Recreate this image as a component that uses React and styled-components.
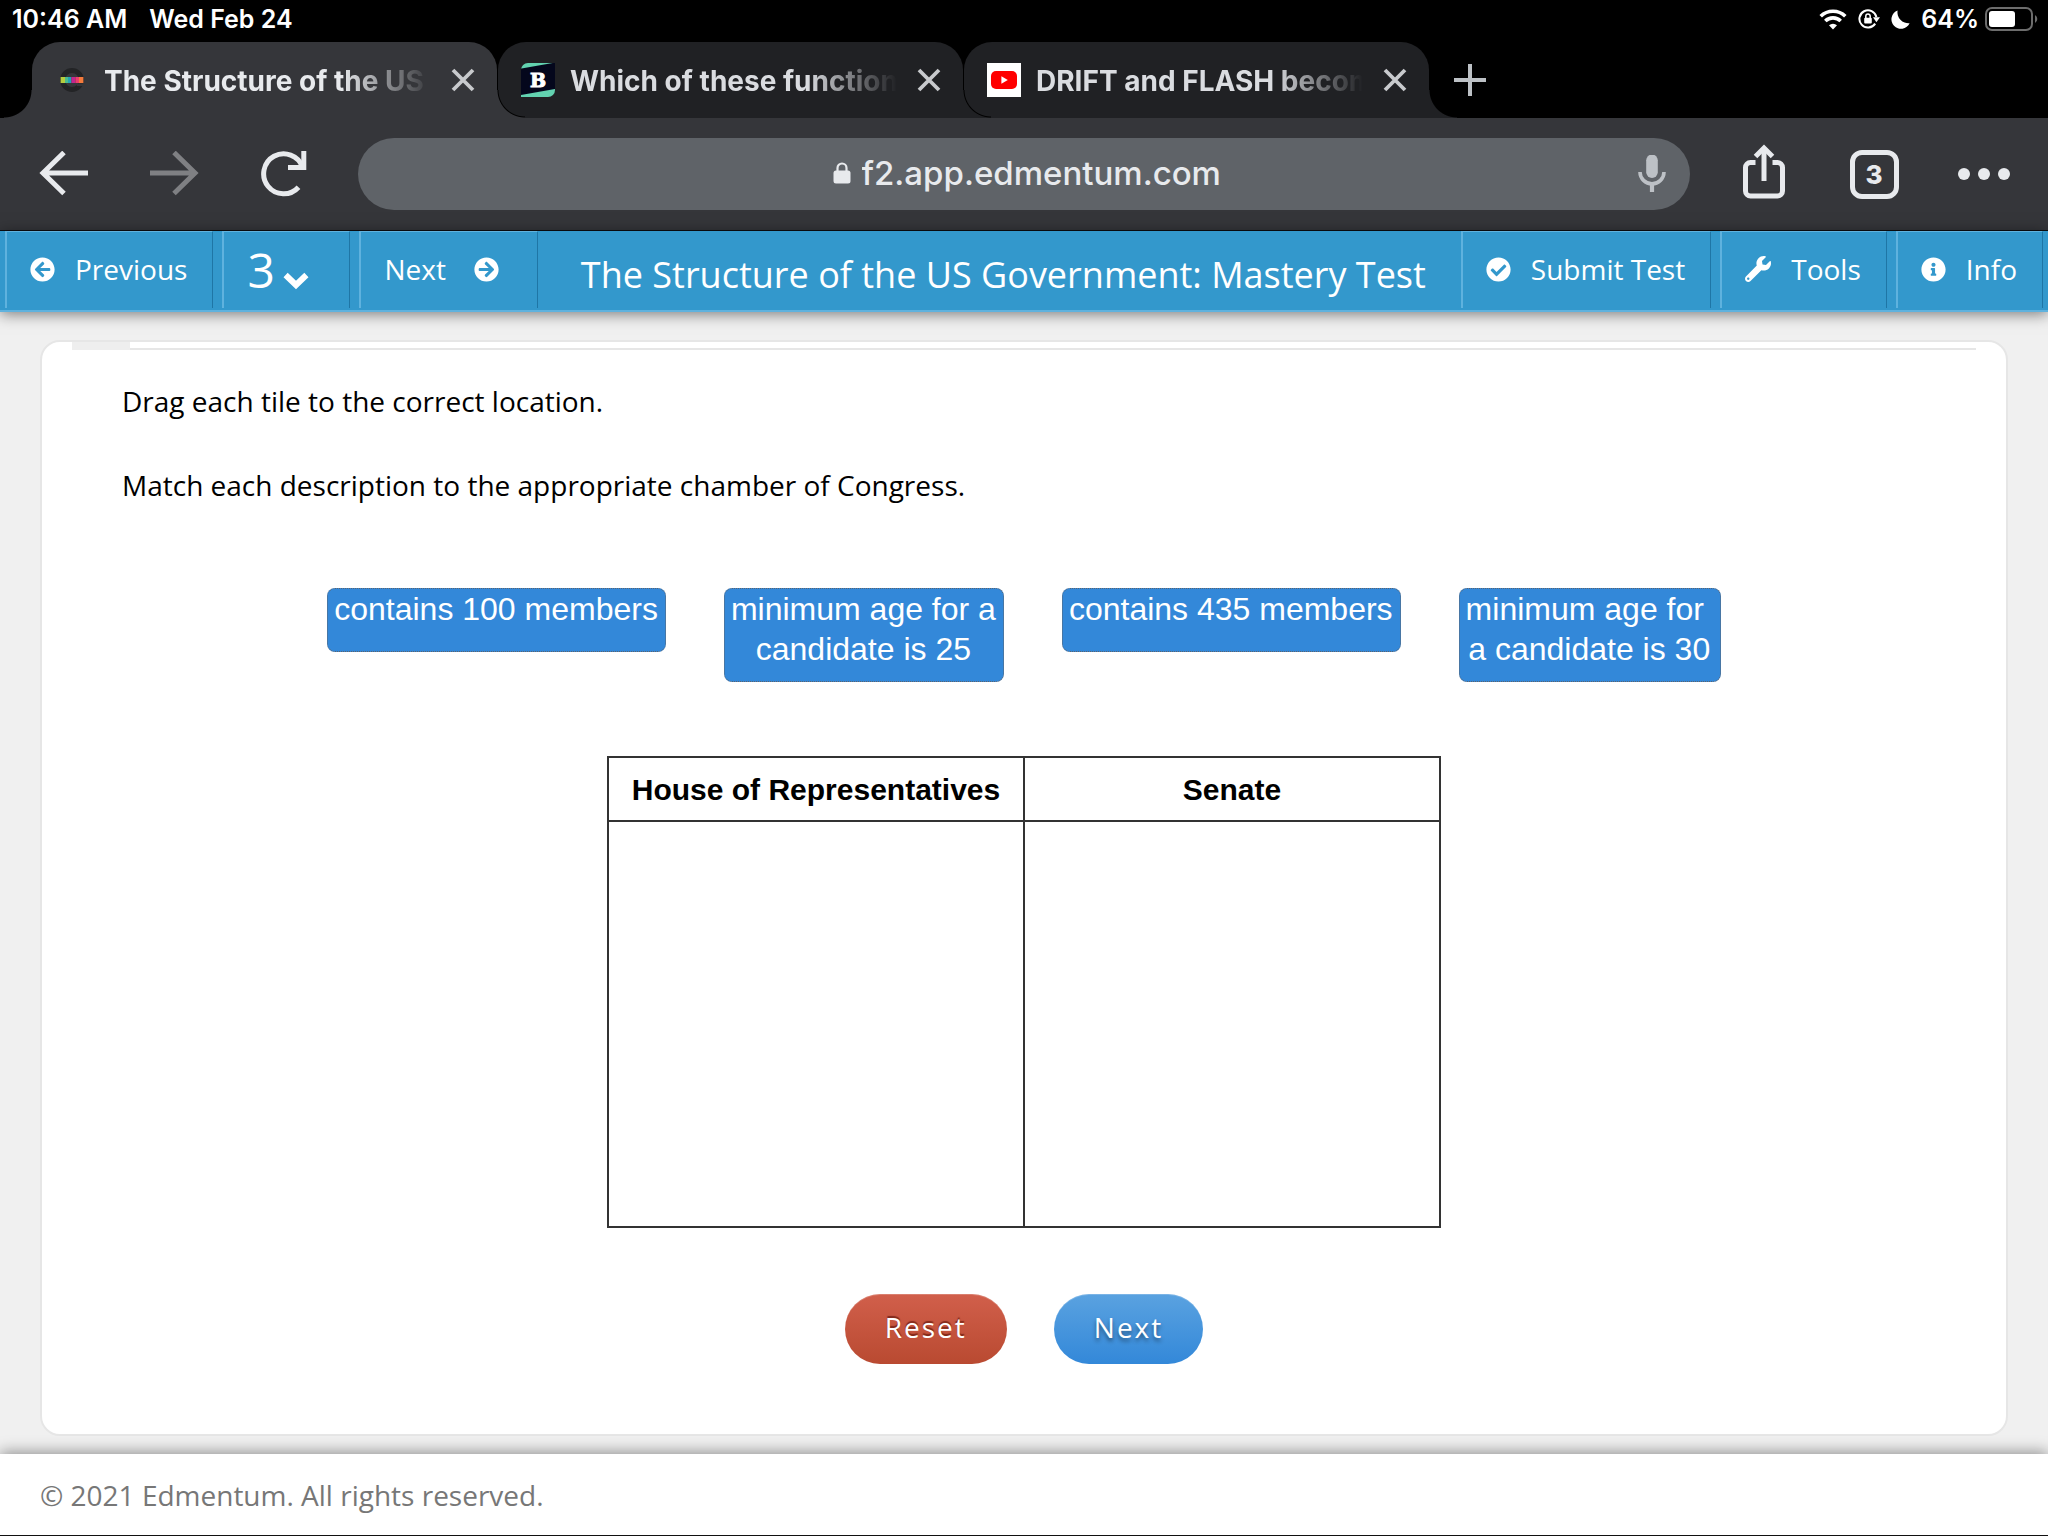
import React from "react";
import styled, { createGlobalStyle, css } from "styled-components";
import {
  FaArrowCircleLeft,
  FaArrowCircleRight,
  FaCheckCircle,
  FaInfoCircle,
  FaWrench,
} from "react-icons/fa";

const systemFont = `Inter, Roboto, "Liberation Sans", sans-serif`;
const pageFont = `"Open Sans", "Noto Sans", sans-serif`;
const tileFont = `"Liberation Sans", Arial, sans-serif`;

const colors = {
  toolbar: "#35363a",
  idleTab: "#202124",
  field: "#5f6368",
  glyph: "#e8eaed",
  bar: "#3398cc",
  barLight: "#5fb2de",
  barDark: "#1f76a6",
  page: "#f0f0f0",
  line: "#e6e6e6",
  tile: "#3388d9",
};

const GlobalStyle = createGlobalStyle`
  * { box-sizing: border-box; }
  body { margin: 0; background: ${colors.page}; }
  button, input, select { font: inherit; color: inherit; margin: 0; }
  h1, p, ul { margin: 0; padding: 0; }
`;

const Screen = styled.div`
  display: flex;
  flex-direction: column;
  min-height: 100vh;
  font-family: ${pageFont};
`;

/* ---------- status bar ---------- */

const StatusBar = styled.header`
  display: flex;
  align-items: flex-start;
  justify-content: space-between;
  height: 42px;
  padding: 0 10px 0 12px;
  background: #000;
  color: #fff;
  font: 600 25px/38px ${systemFont};
`;

const StatusGroup = styled.div`
  display: flex;
  align-items: center;
  height: 38px;
  gap: ${(p) => p.$gap}px;
`;

/* ---------- tabs ---------- */

const TabStrip = styled.nav`
  display: flex;
  gap: 1px;
  height: 76px;
  padding-left: 32px;
  background: #000;
`;

const flare = css`
  content: "";
  position: absolute;
  bottom: 0;
  width: 28px;
  height: 28px;
`;

const Tab = styled.div`
  position: relative;
  display: flex;
  align-items: center;
  flex: 0 1 465px;
  min-width: 0;
  padding: 0 16px 0 23px;
  border-radius: 28px 28px 0 0;
  background: ${(p) => (p.$active ? colors.toolbar : colors.idleTab)};
  z-index: ${(p) => p.$level};

  &::after {
    ${flare}
    left: 100%;
    background: radial-gradient(
      circle at 100% 0,
      transparent 26px,
      #000 27px,
      ${(p) => (p.$active ? colors.toolbar : colors.idleTab)} 28px
    );
  }

  &::before {
    ${flare}
    display: ${(p) => (p.$active ? "block" : "none")};
    right: 100%;
    background: radial-gradient(circle at 0 0, transparent 27px, ${colors.toolbar} 28px);
  }
`;

const TabTitle = styled.button`
  flex: 1;
  min-width: 0;
  margin-left: 15px;
  padding: 2px 0 0;
  border: 0;
  background: none;
  color: ${(p) => (p.$active ? "#e8eaed" : "#dadce0")};
  font: 700 28px/40px ${systemFont};
  text-align: left;
  white-space: nowrap;
  overflow: hidden;
  mask-image: linear-gradient(to right, #000 calc(100% - 90px), transparent);
`;

const IconButton = styled.button`
  display: flex;
  align-items: center;
  justify-content: center;
  flex: none;
  width: ${(p) => p.$size}px;
  height: ${(p) => p.$size}px;
  padding: 0;
  border: 0;
  background: none;
  color: ${(p) => p.$color || colors.glyph};
`;

const TabClose = styled(IconButton)`
  margin-left: 14px;
`;

const NewTab = styled(IconButton)`
  align-self: center;
  margin-left: 18px;
`;

/* ---------- browser toolbar ---------- */

const Toolbar = styled.div`
  display: flex;
  align-items: center;
  height: 113px;
  padding: 0 29px;
  background: ${colors.toolbar};
  border-bottom: 1px solid #0c0d10;
`;

const ToolGroup = styled.div`
  display: flex;
  align-items: center;
  gap: 40px;
`;

const Omnibox = styled.div`
  display: grid;
  grid-template-columns: 1fr auto 1fr;
  align-items: center;
  flex: 1;
  height: 72px;
  margin: 0 39px;
  padding: 0 24px 0 32px;
  border-radius: 36px;
  background: ${colors.field};
`;

const Address = styled.label`
  display: flex;
  align-items: center;
  grid-column: 2;
  gap: 11px;
`;

const AddressInput = styled.input`
  width: 362px;
  height: 46px;
  padding: 0 0 2px;
  border: 0;
  outline: 0;
  background: none;
  color: ${colors.glyph};
  font: 500 33px/44px ${systemFont};
`;

const MicSlot = styled.div`
  justify-self: end;
`;

const TabCount = styled.button`
  width: 49px;
  height: 49px;
  padding: 0;
  border: 5px solid ${colors.glyph};
  border-radius: 12px;
  background: none;
  font: 800 26px/39px ${systemFont};
  color: ${colors.glyph};
`;

/* ---------- test bar ---------- */

const TestBar = styled.div`
  display: flex;
  align-items: stretch;
  gap: 9px;
  height: 81px;
  padding: 0 5px;
  background: ${colors.bar};
  border-bottom: 2px solid ${colors.barLight};
  box-shadow: 0 2px 14px rgba(0, 0, 0, 0.5);
  color: #fff;
  z-index: 1;
`;

const barCell = css`
  display: flex;
  align-items: center;
  flex: none;
  margin-bottom: 2px;
  border: 0 solid ${colors.barLight};
  border-width: 1px 1px 0 2px;
  border-right-color: ${colors.barDark};
  background: none;
  white-space: nowrap;
`;

const BarButton = styled.button`
  ${barCell}
  gap: ${(p) => p.$gap}px;
  padding: 0 ${(p) => p.$right || 25}px 2px 23px;
  font: 400 28px/38px ${pageFont};
`;

const PagePicker = styled.label`
  ${barCell}
  gap: 8px;
  padding: 0 40px 0 23px;
`;

const PageSelect = styled.select`
  width: 28px;
  height: 66px;
  padding: 0;
  border: 0;
  appearance: none;
  background: none;
  font: 400 48px/66px ${pageFont};
`;

const PickerArrow = styled.span`
  display: flex;
  padding-top: 22px;
`;

const BarTitle = styled.h1`
  flex: 1;
  padding: 6px 0 0 8px;
  font: 400 36px/76px ${pageFont};
  text-align: center;
  white-space: nowrap;
`;

/* ---------- question ---------- */

const Main = styled.main`
  display: flex;
  flex: 1;
  padding: 28px 40px 18px;
`;

const Card = styled.section`
  display: flex;
  flex-direction: column;
  flex: 1;
  border: 2px solid ${colors.line};
  border-radius: 20px;
  background: #fff;
  padding: 0 30px;
`;

const ProgressLine = styled.div`
  height: 8px;
  border-bottom: 2px solid ${colors.line};
`;

const ProgressMark = styled.div`
  width: 58px;
  height: 8px;
  background: #eeeeee;
`;

const Prompt = styled.div`
  display: flex;
  flex-direction: column;
  gap: 42px;
  padding: 30px 50px 0;
  color: #000;
  font: 400 28px/42px ${pageFont};
`;

const Tiles = styled.ul`
  display: flex;
  align-items: flex-start;
  justify-content: center;
  gap: 58px;
  margin-top: 82px;
  min-height: 94px;
  list-style: none;
`;

const Tile = styled.button`
  display: flex;
  flex-direction: column;
  align-items: center;
  justify-content: flex-start;
  min-height: 64px;
  padding: 0 7px 12px 6px;
  border: 1px dotted #5c6470;
  border-radius: 8px;
  background: ${colors.tile};
  color: #fff;
  font: 400 32px/40px ${tileFont};
  white-space: nowrap;
`;

const Chambers = styled.table`
  align-self: center;
  width: 834px;
  margin-top: 74px;
  border-collapse: collapse;
  table-layout: fixed;
  color: #000;
  font: 700 30px/40px ${tileFont};

  th,
  td {
    padding: 0;
    border: 2px solid #333;
  }
  th {
    height: 64px;
    padding-top: 2px;
  }
  td {
    height: 406px;
  }
`;

const Actions = styled.div`
  display: flex;
  justify-content: center;
  gap: 47px;
  padding: 66px 0 69px;
`;

const PillButton = styled.button`
  height: 70px;
  padding: 0 40px 4px;
  border: 0;
  border-radius: 35px;
  background: ${(p) =>
    p.$primary
      ? "linear-gradient(#5aa2e0, #3388d9)"
      : "linear-gradient(#d15f4b, #b94a31)"};
  box-shadow: inset 0 1px 0 rgba(255, 255, 255, 0.2);
  color: #fff;
  font: 500 28px/38px ${pageFont};
  letter-spacing: 2px;
  text-shadow: ${(p) =>
    p.$primary ? "0 3px 4px rgba(0, 0, 0, 0.45)" : "0 -2px 1px rgba(80, 10, 0, 0.6)"};
`;

const Footer = styled.footer`
  padding: 22px 40px 21px;
  border-bottom: 1px solid #111;
  background: #fff;
  box-shadow: 0 -2px 14px rgba(0, 0, 0, 0.4);
  color: #777;
  font: 400 28px/38px ${pageFont};
  z-index: 1;
`;

/* ---------- drawings ---------- */

const WifiIcon = () => (
  <svg width="28" height="21" viewBox="0 0 28 21" fill="none" stroke="#fff" strokeWidth="3.6">
    <path d="M1.7 7.2a17.6 17.6 0 0 1 24.6 0" />
    <path d="M6.3 12a11 11 0 0 1 15.4 0" />
    <path d="M14 20.4l-4-4.2a6 6 0 0 1 8 0z" fill="#fff" stroke="none" />
  </svg>
);

const RotationLockIcon = () => (
  <svg width="22" height="20" viewBox="0 0 22 20" fill="none" stroke="#fff" strokeWidth="2">
    <path d="M17.2 14.6A8.6 8.6 0 1 1 18.4 8" />
    <path d="M15 8.2h7l-3.6 5z" fill="#fff" stroke="none" />
    <rect x="6.2" y="8.8" width="7.6" height="5.8" rx="1" fill="#fff" stroke="none" />
    <path d="M7.8 9V7.2a2.2 2.2 0 0 1 4.4 0V9" strokeWidth="1.5" />
  </svg>
);

const MoonIcon = () => (
  <svg width="19" height="19" viewBox="0 0 19 19" fill="#fff">
    <path d="M6.6.4A11 11 0 0 0 18.6 13.2 9.5 9.5 0 1 1 6.6.4z" />
  </svg>
);

const BatteryIcon = () => (
  <svg width="53" height="24" viewBox="0 0 53 24">
    <rect x="1" y="1" width="46" height="22" rx="6" fill="none" stroke="#6d6d6d" strokeWidth="2" />
    <rect x="4" y="4" width="26" height="16" rx="3" fill="#fff" />
    <path d="M50 8a4.6 4.6 0 0 1 0 8z" fill="#6d6d6d" />
  </svg>
);

const EdmentumIcon = () => (
  <svg width="34" height="34" viewBox="0 0 34 34">
    <circle cx="17" cy="17" r="9.4" fill="none" stroke="#232426" strokeWidth="5" />
    <path d="M22 20.4h8v2.6h-8z" fill="#35363a" />
    <rect x="5.6" y="14" width="4.4" height="6" fill="#b5cc3f" />
    <rect x="10" y="14" width="3" height="6" fill="#4dbd8b" />
    <rect x="13" y="14" width="3.4" height="6" fill="#22a3b5" />
    <rect x="16.4" y="14" width="4" height="6" fill="#c2268f" />
    <rect x="20.4" y="14" width="3.6" height="6" fill="#ec3b6e" />
    <rect x="24" y="14" width="4.4" height="6" fill="#f47a3c" />
  </svg>
);

const LetterMark = styled.span`
  display: flex;
  align-items: center;
  justify-content: center;
  width: 34px;
  height: 34px;
  border-radius: 7px 0 7px 0;
  background: linear-gradient(170deg, #62d2b0 5px, #04071c 6px, #04071c 31px, #62d2b0 32px);
  color: #fff;
  font: 700 19px/34px "DejaVu Serif", serif;
  -webkit-text-stroke: 1px #fff;
`;

const YouTubeIcon = () => (
  <svg width="34" height="34" viewBox="0 0 34 34">
    <rect width="34" height="34" fill="#fff" />
    <rect x="4" y="8" width="26" height="18" rx="5" fill="#f00" />
    <path d="M14.4 13.2l6.4 3.8-6.4 3.8z" fill="#fff" />
  </svg>
);

const CloseIcon = () => (
  <svg width="24" height="24" viewBox="0 0 24 24" stroke="currentColor" strokeWidth="3.8">
    <path d="M2 2l20 20M22 2L2 22" />
  </svg>
);

const PlusIcon = () => (
  <svg width="32" height="32" viewBox="0 0 32 32" stroke="currentColor" strokeWidth="4">
    <path d="M16 0v32M0 16h32" />
  </svg>
);

const ArrowIcon = ({ forward }) => (
  <svg width="50" height="46" viewBox="0 1 50 46" fill="none" stroke="currentColor" strokeWidth="5">
    <path d={forward ? "M1 23H46M25 2.5L46 23L25 43.5" : "M49 23H4M25 2.5L4 23L25 43.5"} />
  </svg>
);

const ReloadIcon = () => (
  <svg width="46" height="46" viewBox="0 1 46 46" fill="none" stroke="currentColor" strokeWidth="5">
    <path d="M37.5 37.2A20 20 0 1 1 41.5 17" />
    <path d="M42.8 1V17.5H27" />
  </svg>
);

const LockIcon = () => (
  <svg width="18" height="24" viewBox="0 0 18 24">
    <rect x="0.5" y="8.5" width="17" height="13" rx="2.5" fill="#e8eaed" />
    <path d="M4.5 9V6a4.5 4.5 0 0 1 9 0v3" fill="none" stroke="#e8eaed" strokeWidth="2.2" />
  </svg>
);

const MicIcon = () => (
  <svg width="28" height="38" viewBox="0 1 28 38" fill="none" stroke="currentColor" strokeWidth="3.6">
    <rect x="8.2" y="0.5" width="11.600" height="23.5" rx="5.8" fill="currentColor" stroke="none" />
    <path d="M2 18a12 11.8 0 0 0 24 0" />
    <path d="M14 29.5V38" strokeWidth="4.2" />
  </svg>
);

const ShareIcon = () => (
  <svg width="44" height="56" viewBox="0 2 44 56" overflow="visible" fill="none" stroke="currentColor" strokeWidth="5">
    <path d="M13.5 18.5H8.5a5 5 0 0 0-5 5V47a5 5 0 0 0 5 5h27a5 5 0 0 0 5-5V23.5a5 5 0 0 0-5-5h-5" />
    <path d="M22 37V4" />
    <path d="M13.5 12.5L22 4l8.5 8.5" />
  </svg>
);

const MoreIcon = () => (
  <svg width="52" height="12" viewBox="0 0 52 12" fill="currentColor">
    <circle cx="6" cy="6" r="6" />
    <circle cx="26" cy="6" r="6" />
    <circle cx="46" cy="6" r="6" />
  </svg>
);

const ChevronIcon = () => (
  <svg width="26" height="18" viewBox="0 0 26 18" fill="none" stroke="currentColor" strokeWidth="6">
    <path d="M2.6 3L13 13l10.400-10" />
  </svg>
);

/* ---------- data ---------- */

const tabs = [
  { title: "The Structure of the US", icon: <EdmentumIcon />, active: true },
  { title: "Which of these functions", icon: <LetterMark>B</LetterMark> },
  { title: "DRIFT and FLASH becom", icon: <YouTubeIcon /> },
];

const tiles = [
  ["contains 100 members"],
  ["minimum age for a", "candidate is 25"],
  ["contains 435 members"],
  ["minimum age for\u00a0", "a candidate is 30"],
];

export default function App() {
  return (
    <Screen>
      <GlobalStyle />
      <StatusBar>
        <StatusGroup $gap={22}>
          <span>10:46 AM</span>
          <span>Wed Feb 24</span>
        </StatusGroup>
        <StatusGroup $gap={11}>
          <WifiIcon />
          <RotationLockIcon />
          <MoonIcon />
          <StatusGroup $gap={6}>
            <span>64%</span>
            <BatteryIcon />
          </StatusGroup>
        </StatusGroup>
      </StatusBar>

      <TabStrip>
        {tabs.map((tab, i) => (
          <Tab key={tab.title} $active={tab.active} $level={3 - i}>
            {tab.icon}
            <TabTitle $active={tab.active}>{tab.title}</TabTitle>
            <TabClose $size={36} $color="#c8cacd" aria-label="Close tab">
              <CloseIcon />
            </TabClose>
          </Tab>
        ))}
        <NewTab $size={44} $color="#bdc1c6" aria-label="New tab">
          <PlusIcon />
        </NewTab>
      </TabStrip>

      <Toolbar>
        <ToolGroup>
          <IconButton $size={70} aria-label="Back">
            <ArrowIcon />
          </IconButton>
          <IconButton $size={70} $color="#7f8083" aria-label="Forward">
            <ArrowIcon forward />
          </IconButton>
          <IconButton $size={70} aria-label="Reload">
            <ReloadIcon />
          </IconButton>
        </ToolGroup>
        <Omnibox>
          <Address>
            <LockIcon />
            <AddressInput aria-label="Address" defaultValue="f2.app.edmentum.com" />
          </Address>
          <MicSlot>
            <IconButton $size={28} $color="#bdc1c6" aria-label="Voice search">
              <MicIcon />
            </IconButton>
          </MicSlot>
        </Omnibox>
        <ToolGroup>
          <IconButton $size={70} aria-label="Share">
            <ShareIcon />
          </IconButton>
          <IconButton as="div" $size={70}>
            <TabCount aria-label="Open tabs: 3">3</TabCount>
          </IconButton>
          <IconButton $size={70} aria-label="More">
            <MoreIcon />
          </IconButton>
        </ToolGroup>
      </Toolbar>

      <TestBar>
        <BarButton $gap={20}>
          <FaArrowCircleLeft size={25} />
          Previous
        </BarButton>
        <PagePicker>
          <PageSelect aria-label="Question" defaultValue="3">
            <option>3</option>
          </PageSelect>
          <PickerArrow>
            <ChevronIcon />
          </PickerArrow>
        </PagePicker>
        <BarButton $gap={28} $right={38}>
          Next
          <FaArrowCircleRight size={25} />
        </BarButton>
        <BarTitle>The Structure of the US Government: Mastery Test</BarTitle>
        <BarButton $gap={20}>
          <FaCheckCircle size={25} />
          Submit Test
        </BarButton>
        <BarButton $gap={20}>
          <FaWrench size={26} />
          Tools
        </BarButton>
        <BarButton $gap={20}>
          <FaInfoCircle size={25} />
          Info
        </BarButton>
      </TestBar>

      <Main>
        <Card>
          <ProgressLine>
            <ProgressMark />
          </ProgressLine>
          <Prompt>
            <p>Drag each tile to the correct location.</p>
            <p>Match each description to the appropriate chamber of Congress.</p>
          </Prompt>
          <Tiles>
            {tiles.map((lines) => (
              <li key={lines.join()}>
                <Tile draggable>
                  {lines.map((line) => (
                    <span key={line}>{line}</span>
                  ))}
                </Tile>
              </li>
            ))}
          </Tiles>
          <Chambers>
            <thead>
              <tr>
                <th scope="col">House of Representatives</th>
                <th scope="col">Senate</th>
              </tr>
            </thead>
            <tbody>
              <tr>
                <td />
                <td />
              </tr>
            </tbody>
          </Chambers>
          <Actions>
            <PillButton>Reset</PillButton>
            <PillButton $primary>Next</PillButton>
          </Actions>
        </Card>
      </Main>

      <Footer>© 2021 Edmentum. All rights reserved.</Footer>
    </Screen>
  );
}
